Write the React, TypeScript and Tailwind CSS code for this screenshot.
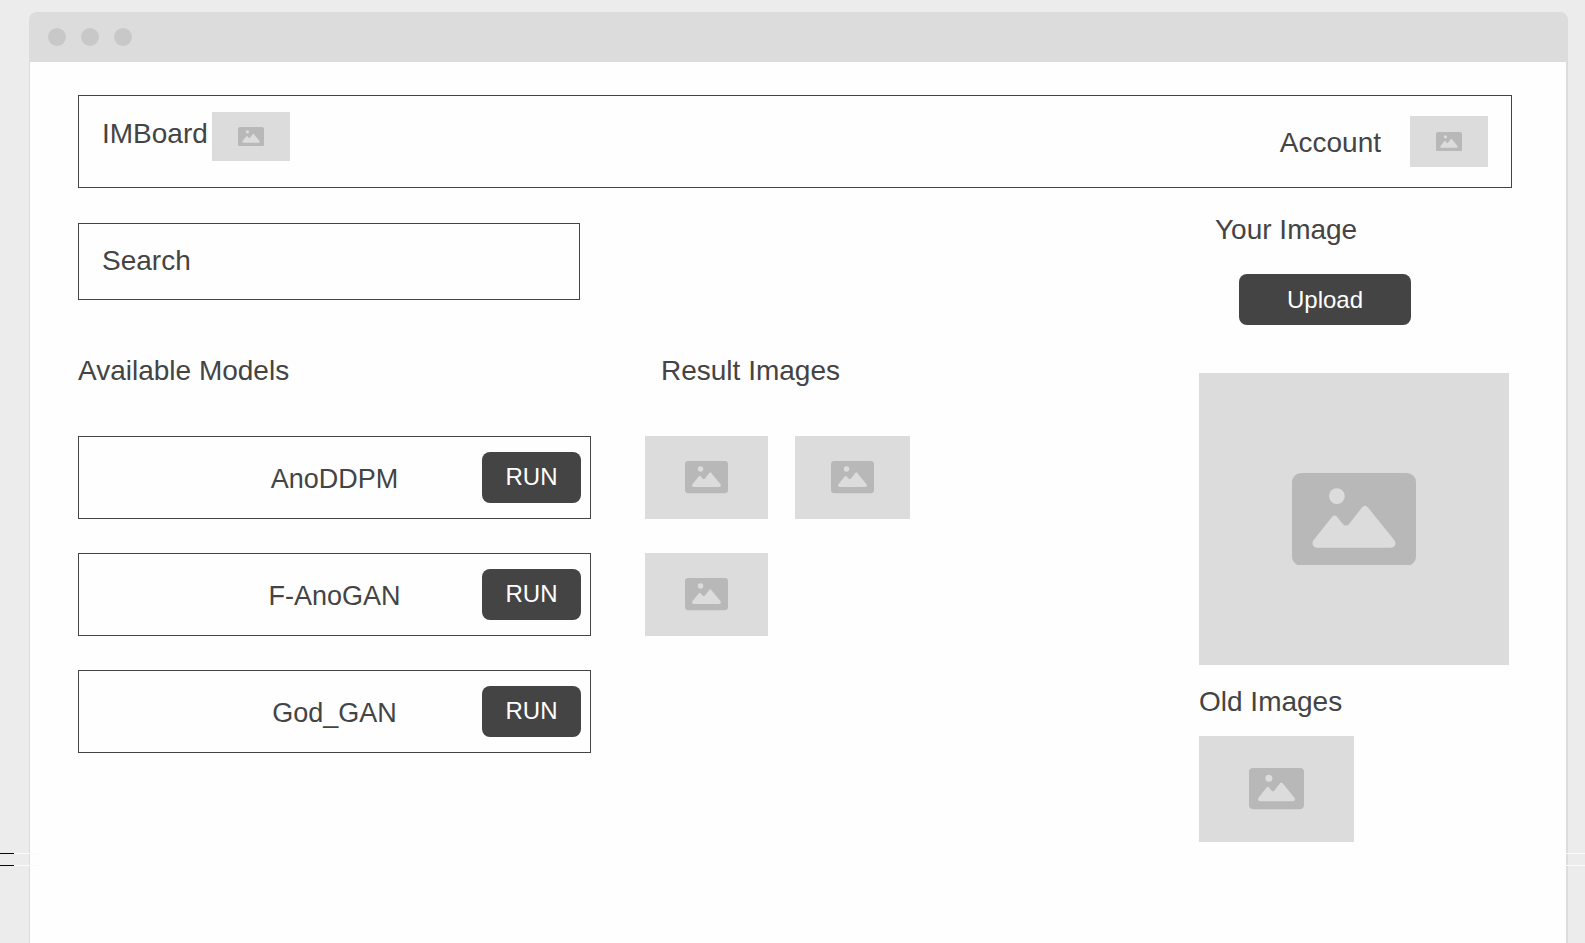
type PlaceholderProps = { label: string; className: string; iconClassName: string };

function Placeholder({ label, className, iconClassName }: PlaceholderProps) {
  return (
    <div
      role="img"
      aria-label={label}
      className={`flex shrink-0 items-center justify-center bg-[#dcdcdc] ${className}`}
    >
      <svg viewBox="0 0 123 92" className={iconClassName} aria-hidden="true">
        <rect width="123" height="92" rx="9" fill="#b8b8b8" />
        <circle cx="44.5" cy="23" r="7.8" fill="#dcdcdc" />
        <path
          d="M39.8 43.3Q42.2 40.8 44.6 43.3L50.6 50.8Q53.5 53.6 56.4 50.8L69.6 34Q72.4 30.8 75.2 34L101.6 66.8Q103.4 69.6 102 72Q100.8 74.2 98 74.2H25Q22.2 74.2 20.9 72Q19.5 69.6 21.3 66.8Z"
          fill="#dcdcdc"
        />
      </svg>
    </div>
  );
}

const models = ["AnoDDPM", "F-AnoGAN", "God_GAN"];

function ModelRow({ name }: { name: string }) {
  return (
    <li className="grid h-[83px] grid-cols-[1fr_auto_1fr] items-center border border-[#444] pr-[9px]">
      <span className="col-start-2 pt-0.5 pl-[9px] text-[27px] leading-8">{name}</span>
      <button
        type="button"
        aria-label={`RUN ${name}`}
        className="h-[51px] w-[99px] justify-self-end rounded-lg bg-[#444] pb-0.5 text-2xl text-white"
      >
        RUN
      </button>
    </li>
  );
}

function ScanLine({ className }: { className: string }) {
  return (
    <div aria-hidden="true" className={`pointer-events-none absolute inset-x-0 flex h-px justify-between ${className}`}>
      <div className="flex">
        <div className="w-3.5 bg-[#1a0008]" />
        <div className="w-[30px] bg-[#f8fcfa]" />
      </div>
      <div className="w-[19px] bg-[#fafcfb]" />
    </div>
  );
}

export default function App() {
  return (
    <div className="relative flex min-h-screen flex-col bg-[#ececec] pt-3 pr-[17px] pl-[29px] font-['Liberation_Sans',Arial,sans-serif] text-[28px] leading-8 text-[#444]">
      <div className="flex h-[50px] items-center gap-[15px] rounded-t-lg bg-[#dcdcdc] pl-[19px]">
        <span className="size-[18px] rounded-full bg-[#c8c8c8]" />
        <span className="size-[18px] rounded-full bg-[#c8c8c8]" />
        <span className="size-[18px] rounded-full bg-[#c8c8c8]" />
      </div>

      <div className="flex-1 border-r-2 border-l border-[#dcdcdc] bg-[#fefefe] pt-[33px] pr-[54px] pb-10 pl-12">
        <header className="flex h-[93px] items-center justify-between border border-[#444] pr-[23px] pl-[23px]">
          <div className="flex gap-1 self-start pt-4">
            <h1 className="pt-1.5">IMBoard</h1>
            <Placeholder label="Logo" className="h-[49px] w-[78px]" iconClassName="w-[26px]" />
          </div>
          <div className="flex items-center gap-[29px]">
            <a href="#account" className="pt-0.5">Account</a>
            <Placeholder label="Profile" className="h-[51px] w-[78px]" iconClassName="w-[26px]" />
          </div>
        </header>

        <div className="grid grid-cols-[1067fr_313fr] gap-[54px]">
          <main className="pt-[35px]">
            <input
              type="search"
              aria-label="Search"
              placeholder="Search"
              className="block h-[77px] w-full max-w-[502px] border border-[#444] bg-transparent px-[23px] pb-0.5 outline-none placeholder:text-[#444] placeholder:opacity-100"
            />
            <div className="mt-[55px] grid grid-cols-[513fr_500fr] gap-[54px]">
              <section>
                <h2>Available Models</h2>
                <ul className="mt-[49px] flex flex-col gap-[34px]">
                  {models.map((name) => (
                    <ModelRow key={name} name={name} />
                  ))}
                </ul>
              </section>
              <section>
                <h2 className="pl-4">Result Images</h2>
                <div className="mt-[49px] flex flex-col gap-[34px]">
                  <div className="flex gap-[27px]">
                    <Placeholder label="Result 1" className="h-[83px] w-[123px]" iconClassName="w-[43px]" />
                    <Placeholder label="Result 2" className="h-[83px] w-[115px]" iconClassName="w-[43px]" />
                  </div>
                  <Placeholder label="Result 3" className="h-[83px] w-[123px]" iconClassName="w-[43px]" />
                </div>
              </section>
            </div>
          </main>

          <aside className="pt-[26px]">
            <h2 className="pl-4">Your Image</h2>
            <button
              type="button"
              className="mt-7 ml-10 block h-[51px] w-[172px] rounded-lg bg-[#444] text-2xl text-white"
            >
              Upload
            </button>
            <Placeholder
              label="Your image"
              className="mt-12 h-[292px] w-full max-w-[310px]"
              iconClassName="w-[124px]"
            />
            <h2 className="mt-[21px]">Old Images</h2>
            <Placeholder label="Old image" className="mt-[18px] h-[106px] w-[155px]" iconClassName="w-[55px]" />
          </aside>
        </div>
      </div>

      <ScanLine className="top-[853px]" />
      <ScanLine className="top-[865px]" />
    </div>
  );
}
